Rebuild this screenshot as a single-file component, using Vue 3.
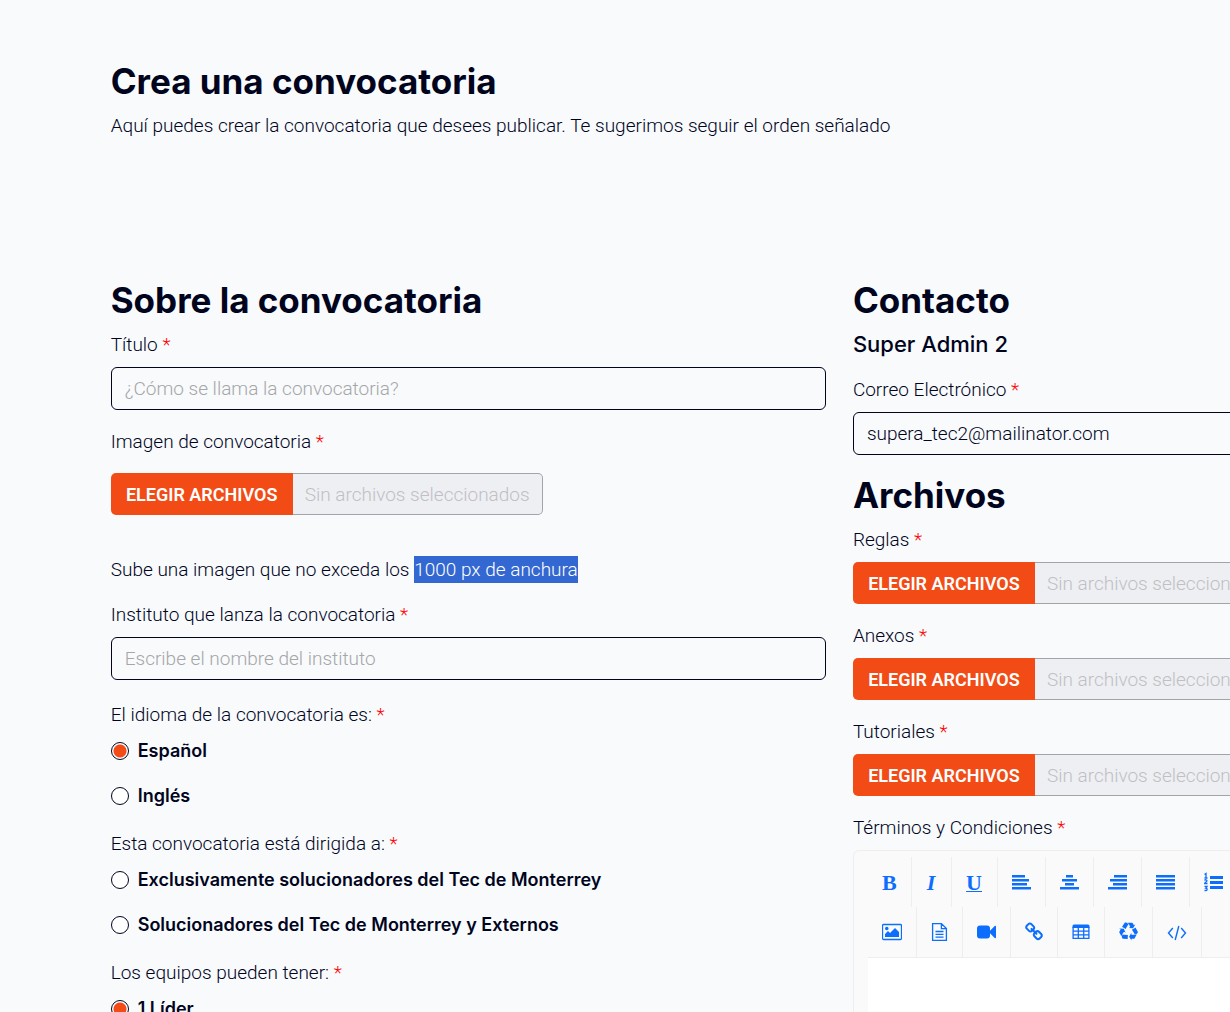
<script setup>
import { ref } from 'vue'

const language = ref('es')
const audience = ref('')
const team = ref('leader')

const groups = [
  {
    name: 'language',
    label: 'El idioma de la convocatoria es:',
    model: language,
    options: [
      { value: 'es', text: 'Español' },
      { value: 'en', text: 'Inglés' },
    ],
  },
  {
    name: 'audience',
    label: 'Esta convocatoria está dirigida a:',
    model: audience,
    options: [
      { value: 'tec', text: 'Exclusivamente solucionadores del Tec de Monterrey' },
      { value: 'all', text: 'Solucionadores del Tec de Monterrey y Externos' },
    ],
  },
  {
    name: 'team',
    label: 'Los equipos pueden tener:',
    model: team,
    options: [{ value: 'leader', text: '1 Líder' }],
  },
]

const files = [
  { id: 'rules', label: 'Reglas' },
  { id: 'annexes', label: 'Anexos' },
  { id: 'tutorials', label: 'Tutoriales' },
]

const toolRows = [
  [
    { name: 'Negrita', glyph: 'B', kind: 'bold' },
    { name: 'Cursiva', glyph: 'I', kind: 'italic' },
    { name: 'Subrayado', glyph: 'U', kind: 'underline' },
    { name: 'Alinear a la izquierda', w: 19, d: 'M0 3h13v2.500H0zM0 7h17v2.500H0zM0 11h15v2.500H0zM0 15h19v2.500H0z' },
    { name: 'Centrar', w: 19, d: 'M6 3h7v2.500H6zM2 7h15v2.500H2zM5 11h9v2.500H5zM0 15h19v2.500H0z' },
    { name: 'Alinear a la derecha', w: 19, d: 'M6 3h13v2.500H6zM2 7h17v2.500H2zM5 11h14v2.500H5zM0 15h19v2.500H0z' },
    { name: 'Justificar', w: 19, d: 'M0 3h19v2.500H0zM0 7h19v2.500H0zM0 11h19v2.500H0zM0 15h19v2.500H0z' },
    {
      name: 'Lista numerada',
      w: 19,
      d: 'M6 4h13v3H6zM6 9h13v3H6zM6 14h13v3H6z',
      line: 'M.5 2.500 2 1.500V6M.5 6h3M.5 8.500c.5-1 2.500-1 2.500.2 0 1-2.300 1.600-2.300 2.800h2.800M.5 14.300h2.500L1.700 16c2 0 1.800 2.500.2 2.500H.5',
      weight: 1.3,
    },
  ],
  [
    { name: 'Imagen', w: 20, d: 'M3 15v-3l3-3 2 2 5-5 4 4v5zM3 6.500a1.800 1.800 0 1 1 3.600 0a1.800 1.800 0 0 1-3.600 0z', line: 'M1.500 2.500h17a1 1 0 0 1 1 1v13a1 1 0 0 1-1 1h-17a1 1 0 0 1-1-1v-13a1 1 0 0 1 1-1z', weight: 1.3 },
    { name: 'Archivo', w: 17, line: 'M1.600 1.600h8.800l5 5v11.800H1.600zM10.400 1.600v5h5M4.500 9.500h8M4.500 12.300h8M4.500 15.100h8', weight: 1.3 },
    { name: 'Video', w: 19, d: 'M3 3.500h7a3 3 0 0 1 3 3v7a3 3 0 0 1-3 3H3a3 3 0 0 1-3-3v-7a3 3 0 0 1 3-3zM13 8.800l4.700-4.800q1.300-.5 1.300.6v10.800q0 1.100-1.300.6L13 11.200z' },
    {
      name: 'Enlace',
      w: 18,
      box: '64 0 1664 1792',
      d: 'M1520 1216q0-40-28-68l-208-208q-28-28-68-28-42 0-72 32 3 3 19 18.500t21.500 21.500 15 19 13 25.500 3.500 27.500q0 40-28 68t-68 28q-15 0-27.500-3.500t-25.500-13-19-15-21.500-21.500-18.500-19q-33 31-33 73 0 40 28 68l206 207q27 27 68 27 40 0 68-26l147-146q28-28 28-67zm-703-705q0-40-28-68l-206-207q-28-28-68-28-39 0-68 27l-147 146q-28 28-28 67 0 40 28 68l208 208q27 27 68 27 42 0 72-31-3-3-19-18.500t-21.500-21.500-15-19-13-25.500-3.500-27.500q0-40 28-68t68-28q15 0 27.500 3.500t25.500 13 19 15 21.500 21.500 18.500 19q33-31 33-73zm895 705q0 120-85 203l-147 146q-83 83-203 83-121 0-204-85l-206-207q-83-83-83-203 0-123 88-209l-88-88q-86 88-208 88-120 0-204-84l-208-208q-84-84-84-204t85-203l147-146q83-83 203-83 121 0 204 85l206 207q83 83 83 203 0 123-88 209l88 88q86-88 208-88 120 0 204 84l208 208q84 84 84 204z',
    },
    { name: 'Tabla', w: 18, d: 'M2 2.500h14a1.500 1.500 0 0 1 1.500 1.500v2H.5V4A1.500 1.500 0 0 1 2 2.500z', line: 'M1.100 5v11.400h15.800V5M1 9.200h16M1 12.800h16M6.300 5v11M11.700 5v11', weight: 1.3 },
    {
      name: 'Restablecer',
      w: 19,
      box: '0 0 1792 1792',
      d: 'M836 1169l-15 368-2 22-420-29q-36-3-67-31.500t-47-65.500q-11-27-14.500-55t4-65 12-55 21.500-64 19-53q78 12 509 28zm-387-586l180 379-147-92q-63 72-111.500 144.500t-72.500 125-39.500 94.500-18.500 63l-4 21-190-357q-17-26-18-56t6-47l8-18q35-63 114-188l-140-86zm1231 517l-188 359q-12 29-36.500 46.500t-43.500 20.500l-18 4q-71 7-219 12l8 164-230-367 211-362 7 173q170 16 283 5t170-33zm-785-924q-47 63-265 435l-317-187-19-12 225-356q20-31 60-45t80-10q24 2 48.500 12t42 21 41.500 33 36 34.500 36 39.500 32 35zm655 307l212 363q18 37 12.500 76t-27.500 74q-13 20-33 37t-38 28-48.500 22-47 16-51.500 14-46 12q-34-72-265-436l313-195zm-143-226l142-83-220 373-419-20 151-86q-34-89-75-166t-75.500-123.500-64.500-80-47-46.500l-17-13 405 1q31-3 58 10.500t39 28.500l11 15q39 61 112 190z',
    },
    { name: 'Código', w: 20, line: 'M5.800 6 1.500 11l4.300 5M14.200 6l4.300 5-4.300 5M11.800 4 8.200 18', weight: 1.4 },
  ],
]
</script>

<template>
  <main class="page">
    <header class="intro">
      <h1>Crea una convocatoria</h1>
      <p>Aquí puedes crear la convocatoria que desees publicar. Te sugerimos seguir el orden señalado</p>
    </header>

    <form class="columns" @submit.prevent>
      <section class="column">
        <h2>Sobre la convocatoria</h2>
        <div class="field">
          <label for="title">Título <span class="req">*</span></label>
          <input id="title" class="text" type="text" placeholder="¿Cómo se llama la convocatoria?">
        </div>
        <div class="field image-field">
          <label for="image">Imagen de convocatoria <span class="req">*</span></label>
          <div class="file file-short">
            <button type="button">ELEGIR ARCHIVOS</button>
            <input id="image" type="text" placeholder="Sin archivos seleccionados" disabled>
          </div>
        </div>
        <p class="hint">Sube una imagen que no exceda los <mark>1000 px de anchura</mark></p>
        <div class="field">
          <label for="institute">Instituto que lanza la convocatoria <span class="req">*</span></label>
          <input id="institute" class="text" type="text" placeholder="Escribe el nombre del instituto">
        </div>
        <fieldset v-for="g in groups" :key="g.name">
          <legend>{{ g.label }} <span class="req">*</span></legend>
          <label v-for="o in g.options" :key="o.value" class="option">
            <input v-model="g.model.value" type="radio" :name="g.name" :value="o.value">
            {{ o.text }}
          </label>
        </fieldset>
      </section>

      <section class="column">
        <h2>Contacto</h2>
        <h3>Super Admin 2</h3>
        <div class="field">
          <label for="email">Correo Electrónico <span class="req">*</span></label>
          <input id="email" class="text" type="email" value="supera_tec2@mailinator.com">
        </div>
        <h2>Archivos</h2>
        <div v-for="f in files" :key="f.id" class="field">
          <label :for="f.id">{{ f.label }} <span class="req">*</span></label>
          <div class="file">
            <button type="button">ELEGIR ARCHIVOS</button>
            <input :id="f.id" type="text" placeholder="Sin archivos seleccionados" disabled>
          </div>
        </div>
        <div class="field">
          <label for="terms">Términos y Condiciones <span class="req">*</span></label>
          <div class="editor">
            <div class="toolbar">
              <div v-for="(row, r) in toolRows" :key="r" class="tools">
                <button v-for="t in row" :key="t.name" type="button" :class="t.kind" :aria-label="t.name">
                  <template v-if="t.glyph">{{ t.glyph }}</template>
                  <svg v-else :width="t.w" height="20" :viewBox="t.box || `0 0 ${t.w} 20`" aria-hidden="true">
                    <path v-if="t.d" :d="t.d" fill="currentColor" />
                    <path v-if="t.line" :d="t.line" fill="none" stroke="currentColor" :stroke-width="t.weight" />
                  </svg>
                </button>
              </div>
            </div>
            <textarea id="terms"></textarea>
          </div>
        </div>
      </section>
    </form>
  </main>
</template>

<style>
html {
  scrollbar-width: none;
  background: #f8fafc;
}
body {
  margin: 0;
}
</style>

<style scoped>
.page {
  box-sizing: border-box;
  height: 100vh;
  overflow: hidden;
  padding: 59px 0 0 9%;
  background: #f8fafc;
  color: #00041d;
  font: 300 19px/27px Roboto, "Liberation Sans", sans-serif;
}
.page * {
  box-sizing: border-box;
}
h1,
h2,
h3,
p,
fieldset {
  margin: 0;
}
h1,
h2 {
  margin-bottom: 9px;
  font: 700 35px/44px Inter, "Liberation Sans", sans-serif;
}
h3 {
  margin-bottom: 18px;
  font: 500 22px/27px Inter, "Liberation Sans", sans-serif;
}
.intro {
  margin-bottom: 139px;
}
.columns {
  display: grid;
  grid-template-columns: minmax(0, 715fr) minmax(0, 404fr);
  gap: 27px;
  margin-right: -27px;
}
.field {
  margin-bottom: 18px;
}
.field > label {
  display: block;
  margin-bottom: 9px;
}
.req {
  color: #f00;
}
input,
button {
  font: inherit;
  color: inherit;
}
.text {
  display: block;
  width: 100%;
  height: 43px;
  padding: 0 13px;
  border: 1px solid #00041d;
  border-radius: 6px;
  background: transparent;
}
.text::placeholder {
  color: #a5a6a8;
  opacity: 1;
}
.file {
  display: flex;
  height: 42px;
}
.file button {
  flex: none;
  width: 182px;
  padding: 0;
  border: 0;
  border-radius: 5px 0 0 5px;
  background: #f24b16;
  color: #fff;
  font-size: 18px;
  font-weight: 600;
}
.file input {
  flex: 1;
  min-width: 0;
  padding: 0 12px;
  border: 1px solid #a3a4aa;
  border-left: 0;
  border-radius: 0 5px 5px 0;
  background: #eeeff2;
}
.file input::placeholder {
  color: #bfc0c5;
  opacity: 1;
}
.file-short {
  max-width: 432px;
}
.image-field {
  margin-bottom: 41px;
}
.image-field > label {
  margin-bottom: 18px;
}
.hint {
  margin-bottom: 18px;
}
mark {
  display: inline-block;
  background: #3367d1;
  color: #fff;
}
fieldset {
  margin-top: 21px;
  padding: 0;
  border: 0;
}
legend {
  padding: 0;
  margin-bottom: 9px;
}
.option {
  display: flex;
  align-items: center;
  gap: 9px;
  font: 600 18px/27px Inter, "Liberation Sans", sans-serif;
}
.option + .option {
  margin-top: 18px;
}
.option input {
  appearance: none;
  flex: none;
  width: 18px;
  height: 18px;
  margin: 0;
  border: 1px solid #00041d;
  border-radius: 50%;
  background: #fff;
}
.option input:checked {
  background: radial-gradient(circle, #f24b16 6px, #fff 7px);
}
.editor {
  padding: 6px 14px 14px;
  border: 1px solid #eee;
  border-radius: 6px;
  background: #fafafa;
}
.toolbar {
  border-bottom: 1px solid #eee;
}
.tools {
  display: flex;
  height: 50px;
}
.tools button {
  flex: none;
  display: flex;
  align-items: center;
  justify-content: center;
  padding: 0 14px;
  border: 0;
  border-right: 1px solid #eee;
  background: transparent;
  color: #0d6efd;
  font: 700 22px/27px "Liberation Serif", serif;
}
.tools .italic {
  min-width: 40px;
  font-style: italic;
}
.tools .underline {
  min-width: 46px;
  text-decoration: underline;
  text-decoration-thickness: 1px;
}
textarea {
  display: block;
  width: 100%;
  height: 270px;
  border: 0;
  resize: none;
  background: #fff;
}
</style>
